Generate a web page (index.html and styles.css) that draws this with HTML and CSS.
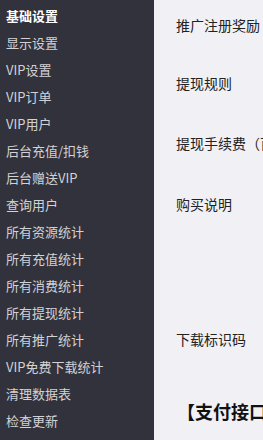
FILE: index.html
```html
<!DOCTYPE html>
<html lang="zh-CN">
<head>
  <meta charset="UTF-8" />
  <title>设置</title>
  <link rel="stylesheet" href="styles.css">
</head>
<body>
  <div class="layout">
    <ul class="side-menu">
      <li class="active">基础设置</li>
      <li>显示设置</li>
      <li>VIP设置</li>
      <li>VIP订单</li>
      <li>VIP用户</li>
      <li>后台充值/扣钱</li>
      <li>后台赠送VIP</li>
      <li>查询用户</li>
      <li>所有资源统计</li>
      <li>所有充值统计</li>
      <li>所有消费统计</li>
      <li>所有提现统计</li>
      <li>所有推广统计</li>
      <li>VIP免费下载统计</li>
      <li>清理数据表</li>
      <li>检查更新</li>
    </ul>
    <div class="main">
      <div class="field f1">推广注册奖励</div>
      <div class="field f2">提现规则</div>
      <div class="field f3">提现手续费（百分比）</div>
      <div class="field f4">购买说明</div>
      <div class="field f5">下载标识码</div>
      <h3 class="section">【支付接口】</h3>
    </div>
  </div>
</body>
</html>
```

FILE: styles.css
```css
* {
  margin: 0;
  padding: 0;
  box-sizing: border-box;
}
body {
  font-family: "Noto Sans CJK SC", "DejaVu Sans", sans-serif;
  background: #f1f0f5;
  overflow: hidden;
}
.layout {
  display: flex;
  height: 440px;
}

/* menu gauche */
.side-menu {
  list-style: none;
  width: 154px;
  flex-shrink: 0;
  background: #32323c;
  padding-top: 2px;
}
.side-menu li {
  height: 27px;
  line-height: 27px;
  padding-left: 6px;
  font-size: 13px;
  color: #d2d2d6;
  white-space: nowrap;
}
.side-menu li.active {
  color: #fff;
  font-weight: bold;
}

/* contenu */
.main {
  flex: 1;
  padding: 15px 0 0 22px;
  overflow: hidden;
  white-space: nowrap;
}
.field {
  font-size: 14px;
  line-height: 20px;
  color: #222;
}
.f1 { height: 58px; }
.f2 { height: 60px; }
.f3 { height: 61px; }
.f4 { height: 135px; }
.f5 { height: 70px; }
.section {
  font-size: 18px;
  line-height: 24px;
  font-weight: bold;
  color: #111;
  margin-left: 1px;
}
```
